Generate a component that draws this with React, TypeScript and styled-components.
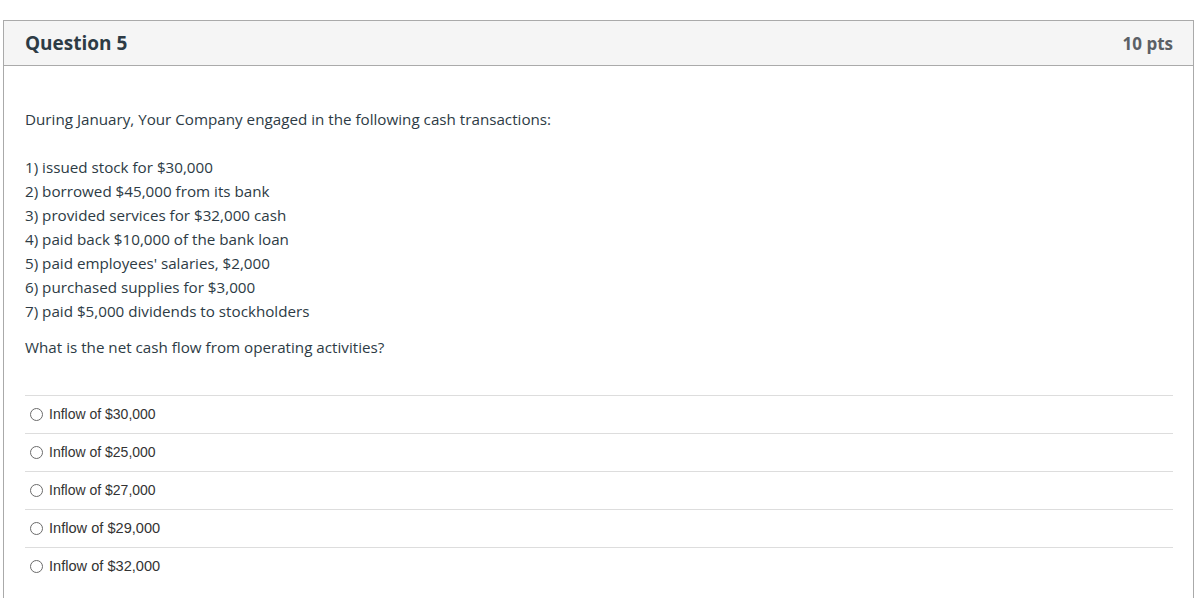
import styled, { createGlobalStyle } from "styled-components";

const GlobalStyle = createGlobalStyle`
  body {
    margin: 0;
    background: #fff;
    font-family: "Open Sans", "Noto Sans", sans-serif;
    color: #2d3b45;
  }
`;

const Page = styled.div`
  padding: 20px 0 0 3px;
`;

const Card = styled.div`
  min-height: 578px;
  border: 1px solid #aaaaaa;
  border-bottom: none;
  box-sizing: border-box;
`;

const Header = styled.div`
  display: flex;
  align-items: center;
  justify-content: space-between;
  height: 44px;
  padding: 0 20px 0 21px;
  background: #f5f5f5;
  border-bottom: 1px solid #aaaaaa;
`;

const Title = styled.h2`
  margin: 0;
  font-size: 19px;
  font-weight: 700;
  color: #2d3b45;
`;

const Points = styled.span`
  font-size: 17px;
  font-weight: 700;
  color: #5b6065;
`;

const Body = styled.div`
  padding: 41px 20px 0 21px;
`;

const Text = styled.div`
  font-size: 15.2px;
  line-height: 24px;
`;

const Prompt = styled.p`
  margin: 12px 0 0;
  font-size: 15.2px;
  line-height: 24px;
`;

const Answers = styled.div`
  margin-top: 36px;
`;

const Answer = styled.label<{ $big?: boolean }>`
  display: flex;
  align-items: center;
  gap: 6px;
  height: 37px;
  padding: 0 0 2px 5px;
  box-sizing: border-box;
  height: 38px;
  border-top: 1px solid #dddddd;
  font-family: "Liberation Sans", Arial, sans-serif;
  font-size: ${(p) => (p.$big ? "14.6px" : "14px")};
  color: #333;
`;

const Radio = styled.span`
  width: 13px;
  height: 13px;
  margin-top: 2px;
  border: 1px solid #6b6b6b;
  border-radius: 50%;
  box-sizing: border-box;
  flex: none;
`;

const lines = [
  "1) issued stock for $30,000",
  "2) borrowed $45,000 from its bank",
  "3) provided services for $32,000 cash",
  "4) paid back $10,000 of the bank loan",
  "5) paid employees' salaries, $2,000",
  "6) purchased supplies for $3,000",
  "7) paid $5,000 dividends to stockholders",
];

const options = [
  { text: "Inflow of $30,000", big: false },
  { text: "Inflow of $25,000", big: false },
  { text: "Inflow of $27,000", big: false },
  { text: "Inflow of $29,000", big: true },
  { text: "Inflow of $32,000", big: true },
];

export default function App() {
  return (
    <Page>
      <GlobalStyle />
      <Card>
        <Header>
          <Title>Question 5</Title>
          <Points>10 pts</Points>
        </Header>
        <Body>
          <Text>
            During January, Your Company engaged in the following cash transactions:
            <br />
            <br />
            {lines.map((l) => (
              <div key={l}>{l}</div>
            ))}
          </Text>
          <Prompt>What is the net cash flow from operating activities?</Prompt>
          <Answers>
            {options.map((o) => (
              <Answer key={o.text} $big={o.big}>
                <Radio />
                {o.text}
              </Answer>
            ))}
          </Answers>
        </Body>
      </Card>
    </Page>
  );
}
